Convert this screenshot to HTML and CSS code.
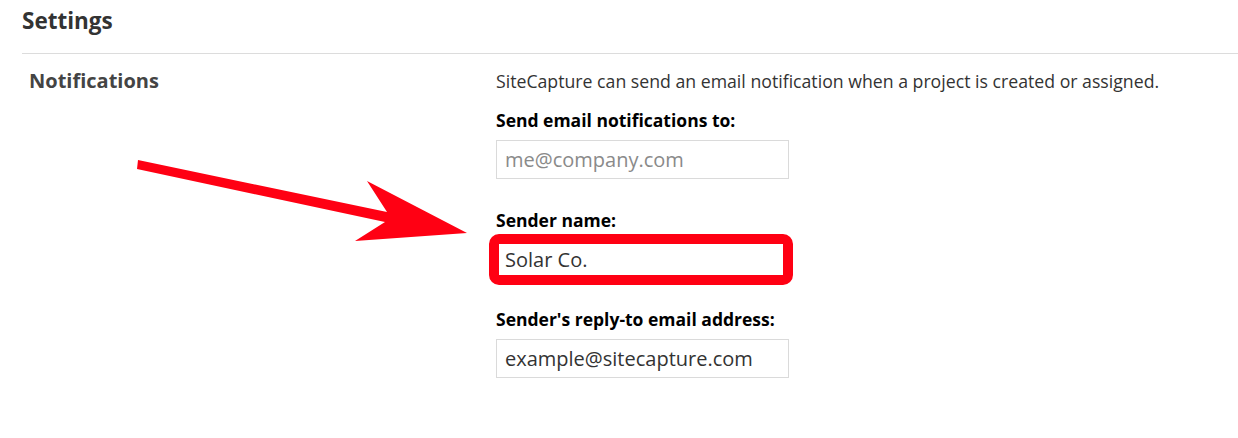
FILE: index.html
```html
<!DOCTYPE html>
<html lang="en">
<head>
<meta charset="utf-8">
<title>Settings</title>
<link rel="stylesheet" href="styles.css">
</head>
<body>
<div class="page">
  <header class="page-header">
    <h1 class="page-title">Settings</h1>
  </header>
  <section class="section">
    <h2 class="section-label">Notifications</h2>
    <div class="section-body">
      <p class="desc">SiteCapture can send an email notification when a project is created or assigned.</p>
      <div class="field">
        <label class="field-label" for="notify-to">Send email notifications to:</label>
        <input class="field-input" id="notify-to" type="text" placeholder="me@company.com">
      </div>
      <div class="field">
        <label class="field-label" for="sender-name">Sender name:</label>
        <div class="input-wrap">
          <input class="field-input" id="sender-name" type="text" value="Solar Co.">
          <span class="highlight"></span>
        </div>
      </div>
      <div class="field">
        <label class="field-label" for="reply-to">Sender's reply-to email address:</label>
        <input class="field-input" id="reply-to" type="text" value="example@sitecapture.com">
      </div>
    </div>
  </section>
  <svg class="arrow" viewBox="130 150 345 100" aria-hidden="true">
    <polygon points="138,160 387,212 367,181 467,233 355,241 385,222 137,169" fill="#ff0013"/>
  </svg>
</div>
</body>
</html>
```
FILE: styles.css
```css
* { box-sizing: border-box; }
html, body { margin: 0; padding: 0; background: #fff; }
body {
  font-family: "Open Sans", "Noto Sans", "DejaVu Sans", sans-serif;
  color: #333;
}
.page {
  position: relative;
  width: 1238px;
  height: 438px;
  padding-left: 22px;
  overflow: hidden;
}
.page-header {
  height: 54px;
  border-bottom: 1px solid #dcdcdc;
}
.page-title {
  margin: 0;
  font-size: 22.5px;
  font-weight: 700;
  line-height: 42px;
  color: #333;
}
.section {
  display: flex;
  padding-top: 15px;
}
.section-label {
  width: 474px;
  margin: 0;
  padding-left: 7px;
  font-size: 20px;
  font-weight: 700;
  line-height: 24px;
  color: #444;
}
.section-body {
  flex: 1;
  display: flex;
  flex-direction: column;
}
.desc {
  margin: 0 0 15px 0;
  font-size: 17.7px;
  line-height: 24px;
  color: #333;
}
.field {
  display: flex;
  flex-direction: column;
  align-items: flex-start;
  margin-bottom: 28.5px;
}
.field-label {
  font-size: 17.5px;
  font-weight: 700;
  line-height: 24px;
  color: #000;
  margin-bottom: 8px;
}
.input-wrap {
  position: relative;
}
.field-input {
  display: block;
  width: 293px;
  height: 39px;
  padding: 0 8px;
  border: 1px solid #dadada;
  border-radius: 0;
  font-family: inherit;
  font-size: 20px;
  color: #333;
  background: #fff;
  outline: none;
}
.field-input::placeholder { color: #8a8a8a; opacity: 1; }
.highlight {
  position: absolute;
  left: -7px;
  top: -6px;
  width: 304px;
  height: 51px;
  border: 10px solid #ff0013;
  border-radius: 10px;
  pointer-events: none;
}
.arrow {
  position: absolute;
  left: 130px;
  top: 150px;
  width: 345px;
  height: 100px;
  pointer-events: none;
}
```
